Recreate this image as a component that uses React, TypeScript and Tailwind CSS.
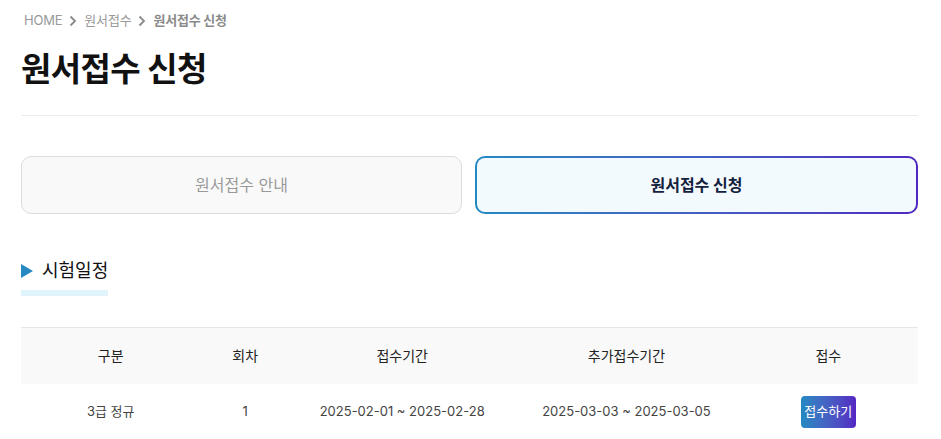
import React from 'react';

const font = { fontFamily: 'Inter, "Noto Sans CJK KR", "Noto Sans", sans-serif' };

const Chevron: React.FC = () => (
  <svg width="10" height="12" viewBox="0 0 10 12" className="mx-[6px]">
    <path d="M2.5 1.5 L7 6 L2.5 10.5" fill="none" stroke="#8a8a8a" strokeWidth="1.8" />
  </svg>
);

export default function App() {
  return (
    <div className="bg-white w-[941px] h-[439px] overflow-hidden pl-[21px] pr-[23px]" style={font}>
      <div className="flex items-center pt-[11px] h-[30px] text-[13px] text-[#999] tracking-[-0.2px]">
        <span className="ml-[3px]">HOME</span>
        <Chevron />
        <span>원서접수</span>
        <Chevron />
        <span className="font-bold text-[#8a8a8a]">원서접수 신청</span>
      </div>

      <h1 className="mt-[15px] text-[33px] leading-[48px] font-bold text-[#111] tracking-[-0.6px]">원서접수 신청</h1>

      <div className="mt-[22px] border-t border-[#ececec]" />

      <div className="mt-[40px] flex gap-[13px]">
        <button className="flex-1 h-[58px] rounded-[10px] border border-[#dcdcdc] bg-[#f9f9f9] text-[16px] text-[#9a9a9a]">
          원서접수 안내
        </button>
        <div className="flex-1 h-[58px] rounded-[10px] p-[2px] bg-gradient-to-r from-[#2289c2] to-[#4e28bf]">
          <div className="h-full rounded-[8px] bg-[#f3fafe] flex items-center justify-center text-[16px] font-bold text-[#14213d]">
            원서접수 신청
          </div>
        </div>
      </div>

      <div className="mt-[44px] flex items-center gap-[9px]">
        <svg width="12" height="14" viewBox="0 0 12 14">
          <path d="M0 0 L12 7 L0 14 Z" fill="#2689c1" />
        </svg>
        <span className="text-[18px] text-[#111] leading-[26px]">시험일정</span>
      </div>
      <div className="mt-[6px] w-[87px] h-[6px] bg-[#e1f4fc]" />

      <table className="mt-[31px] w-full border-collapse table-fixed text-center">
        <colgroup>
          <col className="w-[20%]" />
          <col className="w-[10%]" />
          <col className="w-[25%]" />
          <col className="w-[25%]" />
          <col className="w-[20%]" />
        </colgroup>
        <thead>
          <tr className="bg-[#f9f9f9] border-t border-[#e6e6e6] h-[56px] text-[14px] text-[#222]">
            <th className="font-normal">구분</th>
            <th className="font-normal">회차</th>
            <th className="font-normal">접수기간</th>
            <th className="font-normal">추가접수기간</th>
            <th className="font-normal">접수</th>
          </tr>
        </thead>
        <tbody>
          <tr className="h-[56px] text-[13px] text-[#444]">
            <td>3급 정규</td>
            <td>1</td>
            <td>2025-02-01 ~ 2025-02-28</td>
            <td>2025-03-03 ~ 2025-03-05</td>
            <td>
              <span className="inline-flex items-center justify-center w-[55px] h-[32px] rounded-[4px] bg-gradient-to-r from-[#2289c2] to-[#5326c3] text-white text-[13px]">
                접수하기
              </span>
            </td>
          </tr>
        </tbody>
      </table>
    </div>
  );
}
